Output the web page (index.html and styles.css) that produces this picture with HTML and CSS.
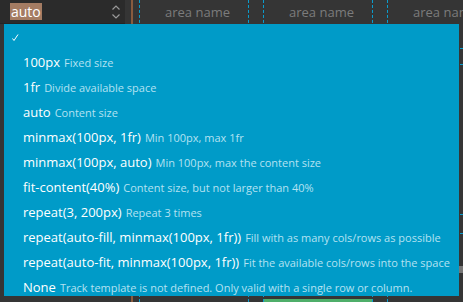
FILE: index.html
```html
<!DOCTYPE html>
<html lang="en">
<head>
    <meta charset="UTF-8">
    <title>Grid track picker</title>
    <link rel="stylesheet" href="styles.css">
</head>
<body>
    <div class="editor">
        <div class="track-input">
            <span class="track-value">auto</span>
            <svg class="spinner" width="10" height="18" viewBox="0 0 10 18">
                <path d="M1.5 6.5 L5 3 L8.5 6.5" />
                <path d="M1.5 11.5 L5 15 L8.5 11.5" />
            </svg>
        </div>
        <div class="divider"></div>
        <div class="col col-first">
            <div class="area-name">area name</div>
        </div>
        <div class="gap"></div>
        <div class="col">
            <div class="area-name">area name</div>
            <div class="area-fill"></div>
        </div>
        <div class="gap"></div>
        <div class="col col-last">
            <div class="area-name">area name</div>
            <div class="row-line row-a"></div>
            <div class="row-line row-b"></div>
            <div class="row-line row-c"></div>
            <div class="row-line row-d"></div>
            <div class="scroll-thumb"></div>
        </div>
    </div>

    <ul class="track-menu">
        <li class="track-option selected">
            <svg class="check" width="8" height="8" viewBox="0 0 8 8">
                <path d="M0.5 4.5 L2 6.5 L6 0.5" />
            </svg>
        </li>
        <li class="track-option"><span class="value">100px</span> <span class="hint">Fixed size</span></li>
        <li class="track-option"><span class="value">1fr</span> <span class="hint">Divide available space</span></li>
        <li class="track-option"><span class="value">auto</span> <span class="hint">Content size</span></li>
        <li class="track-option"><span class="value">minmax(100px, 1fr)</span> <span class="hint">Min 100px, max 1fr</span></li>
        <li class="track-option"><span class="value">minmax(100px, auto)</span> <span class="hint">Min 100px, max the content size</span></li>
        <li class="track-option"><span class="value">fit-content(40%)</span> <span class="hint">Content size, but not larger than 40%</span></li>
        <li class="track-option"><span class="value">repeat(3, 200px)</span> <span class="hint">Repeat 3 times</span></li>
        <li class="track-option"><span class="value">repeat(auto-fill, minmax(100px, 1fr))</span> <span class="hint">Fill with as many cols/rows as possible</span></li>
        <li class="track-option"><span class="value">repeat(auto-fit, minmax(100px, 1fr))</span> <span class="hint">Fit the available cols/rows into the space</span></li>
        <li class="track-option"><span class="value">None</span> <span class="hint">Track template is not defined. Only valid with a single row or column.</span></li>
    </ul>
</body>
</html>
```

FILE: styles.css
```css
* {
    margin: 0;
    padding: 0;
    box-sizing: border-box;
}

body {
    font-family: 'Open Sans', 'Noto Sans', sans-serif;
    background: #353535;
    width: 463px;
    height: 302px;
    overflow: hidden;
    position: relative;
}

.editor {
    display: flex;
    height: 302px;
}

.track-input {
    width: 125px;
    height: 24px;
    flex-shrink: 0;
    background: #2b2b2b;
    border-bottom: 1px solid #242424;
    display: flex;
    align-items: center;
    justify-content: space-between;
    padding: 0 4px 0 10px;
}

.track-value {
    background: #a47c63;
    color: #fff;
    font-size: 14px;
    line-height: 17px;
    padding: 0 1px;
    margin-top: -1px;
}

.spinner path {
    fill: none;
    stroke: #9a9a9a;
    stroke-width: 1.2;
}

.divider {
    width: 2px;
    margin-left: 6px;
    background: #8a5b3e;
    flex-shrink: 0;
}

.col {
    width: 110px;
    flex-shrink: 0;
    border-left: 1px dashed #0a9ccc;
    border-right: 1px dashed #0a9ccc;
    position: relative;
}

.col-first {
    margin-left: 6px;
}

.col-last {
    flex: 1;
    min-width: 0;
    overflow: hidden;
    border-right: none;
}

.gap {
    width: 14px;
    flex-shrink: 0;
}

.area-name {
    height: 24px;
    line-height: 24px;
    color: #7c7c7c;
    font-size: 13px;
    padding-left: 25px;
    white-space: nowrap;
}

.area-fill {
    position: absolute;
    left: 0;
    right: 0;
    bottom: 0;
    height: 3px;
    background: #4fae6a;
}

.row-line {
    position: absolute;
    left: 0;
    right: 0;
    border-top: 1px dashed #0a9ccc;
}

.row-a { top: 48px; }
.row-b { top: 64px; }
.row-c { top: 214px; }
.row-d { top: 233px; }

.scroll-thumb {
    position: absolute;
    right: 0;
    top: 266px;
    width: 4px;
    height: 7px;
    background: #777;
}

.track-menu {
    position: absolute;
    left: 4px;
    top: 24px;
    width: 455px;
    height: 272px;
    overflow: hidden;
    background: #009bc8;
    list-style: none;
    padding-top: 1px;
}

.track-option {
    height: 25px;
    display: flex;
    gap: 4px;
    padding-left: 19px;
    white-space: nowrap;
    align-items: baseline;
    padding-top: 4px;
}

.track-option .value {
    color: #fff;
    font-size: 13px;
    line-height: 17px;
}

.track-option .hint {
    color: #b4e2f2;
    font-size: 11px;
    line-height: 17px;
}

.track-option.selected {
    align-items: center;
    padding-top: 0;
    padding-left: 8px;
}

.check {
    display: block;
}

.check path {
    fill: none;
    stroke: #fff;
    stroke-width: 1;
}
```
